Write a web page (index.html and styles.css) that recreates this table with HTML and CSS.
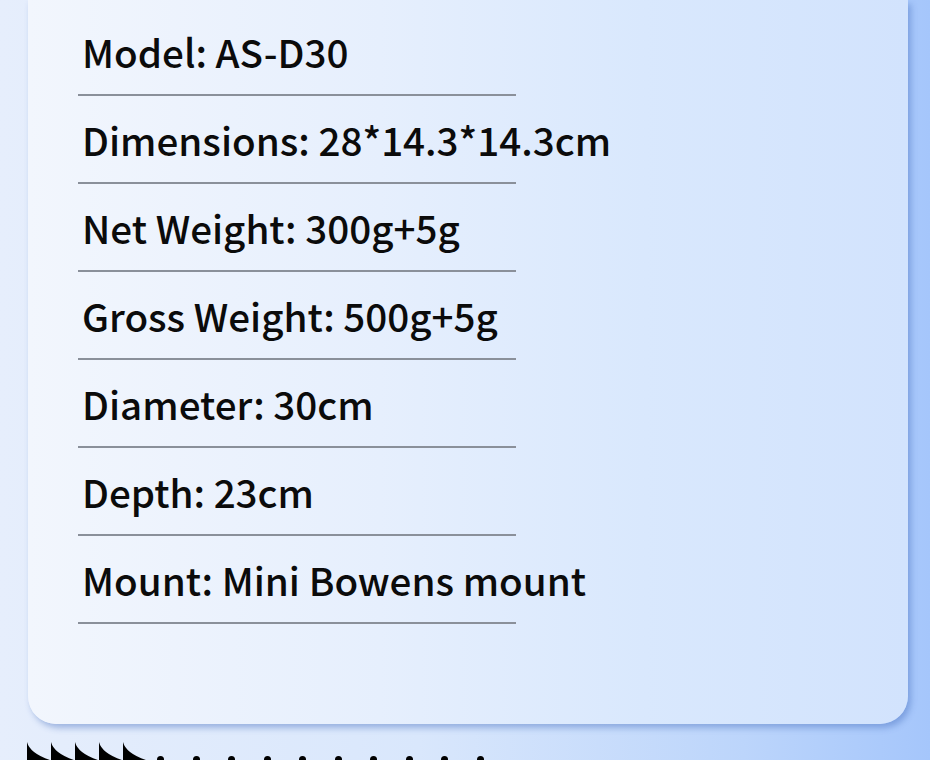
FILE: index.html
```html
<!DOCTYPE html>
<html>
<head>
<meta charset="utf-8">
<link rel="stylesheet" href="styles.css">
</head>
<body>
<div class="page">
  <div class="card">
    <ul class="specs">
      <li class="spec">Model: AS-D30</li>
      <li class="spec">Dimensions: 28*14.3*14.3cm</li>
      <li class="spec">Net Weight: 300g+5g</li>
      <li class="spec">Gross Weight: 500g+5g</li>
      <li class="spec">Diameter: 30cm</li>
      <li class="spec">Depth: 23cm</li>
      <li class="spec">Mount: Mini Bowens mount</li>
    </ul>
  </div>
  <div class="deco">
    <div class="teeth">
      <svg class="tooth" viewBox="0 0 26 20" width="26" height="20"><path d="M0 0 Q3 12 26 19 L26 20 L0 20 Z" fill="#000"/></svg>
      <svg class="tooth" viewBox="0 0 26 20" width="26" height="20"><path d="M0 0 Q3 12 26 19 L26 20 L0 20 Z" fill="#000"/></svg>
      <svg class="tooth" viewBox="0 0 26 20" width="26" height="20"><path d="M0 0 Q3 12 26 19 L26 20 L0 20 Z" fill="#000"/></svg>
      <svg class="tooth" viewBox="0 0 26 20" width="26" height="20"><path d="M0 0 Q3 12 26 19 L26 20 L0 20 Z" fill="#000"/></svg>
      <svg class="tooth" viewBox="0 0 26 20" width="26" height="20"><path d="M0 0 Q3 12 26 19 L26 20 L0 20 Z" fill="#000"/></svg>
    </div>
    <div class="dots">
      <span class="dot"></span><span class="dot"></span><span class="dot"></span><span class="dot"></span><span class="dot"></span>
      <span class="dot"></span><span class="dot"></span><span class="dot"></span><span class="dot"></span><span class="dot"></span>
    </div>
  </div>
</div>
</body>
</html>
```
FILE: styles.css
```css
html, body {
  margin: 0;
  padding: 0;
}
body {
  width: 930px;
  height: 760px;
  overflow: hidden;
  font-family: "Noto Sans CJK SC", "Noto Sans", sans-serif;
}
.page {
  width: 930px;
  height: 760px;
  overflow: hidden;
  background: linear-gradient(90deg, #e6eefc 0%, #d9e7fc 45%, #bcd5fb 80%, #a5c6fb 100%);
  display: flex;
  flex-direction: column;
}
.card {
  margin-left: 28px;
  width: 880px;
  height: 724px;
  box-sizing: border-box;
  padding: 8px 0 0 50px;
  border-radius: 0 0 28px 28px;
  background: linear-gradient(90deg, #f2f6fd 0%, #e6effd 40%, #d9e8fd 70%, #d2e3fd 100%);
  box-shadow: 3px 4px 6px rgba(70, 110, 190, 0.45);
  flex-shrink: 0;
}
.specs {
  list-style: none;
  margin: 0;
  padding: 0;
  width: 438px;
}
.spec {
  box-sizing: border-box;
  height: 88px;
  padding: 16px 0 0 4px;
  font-size: 38.6px;
  font-weight: 500;
  line-height: 54px;
  color: #0b0b0b;
  white-space: nowrap;
  border-bottom: 2px solid #8a909a;
}
.deco {
  display: flex;
  align-items: flex-start;
  margin-top: 18px;
  margin-left: 27px;
}
.teeth {
  display: flex;
}
.tooth {
  display: block;
  margin-right: -2px;
}
.dots {
  display: flex;
  gap: 28.5px;
  margin-left: 10px;
  margin-top: 14px;
}
.dot {
  width: 7px;
  height: 7px;
  border-radius: 50%;
  background: #000;
}
```
